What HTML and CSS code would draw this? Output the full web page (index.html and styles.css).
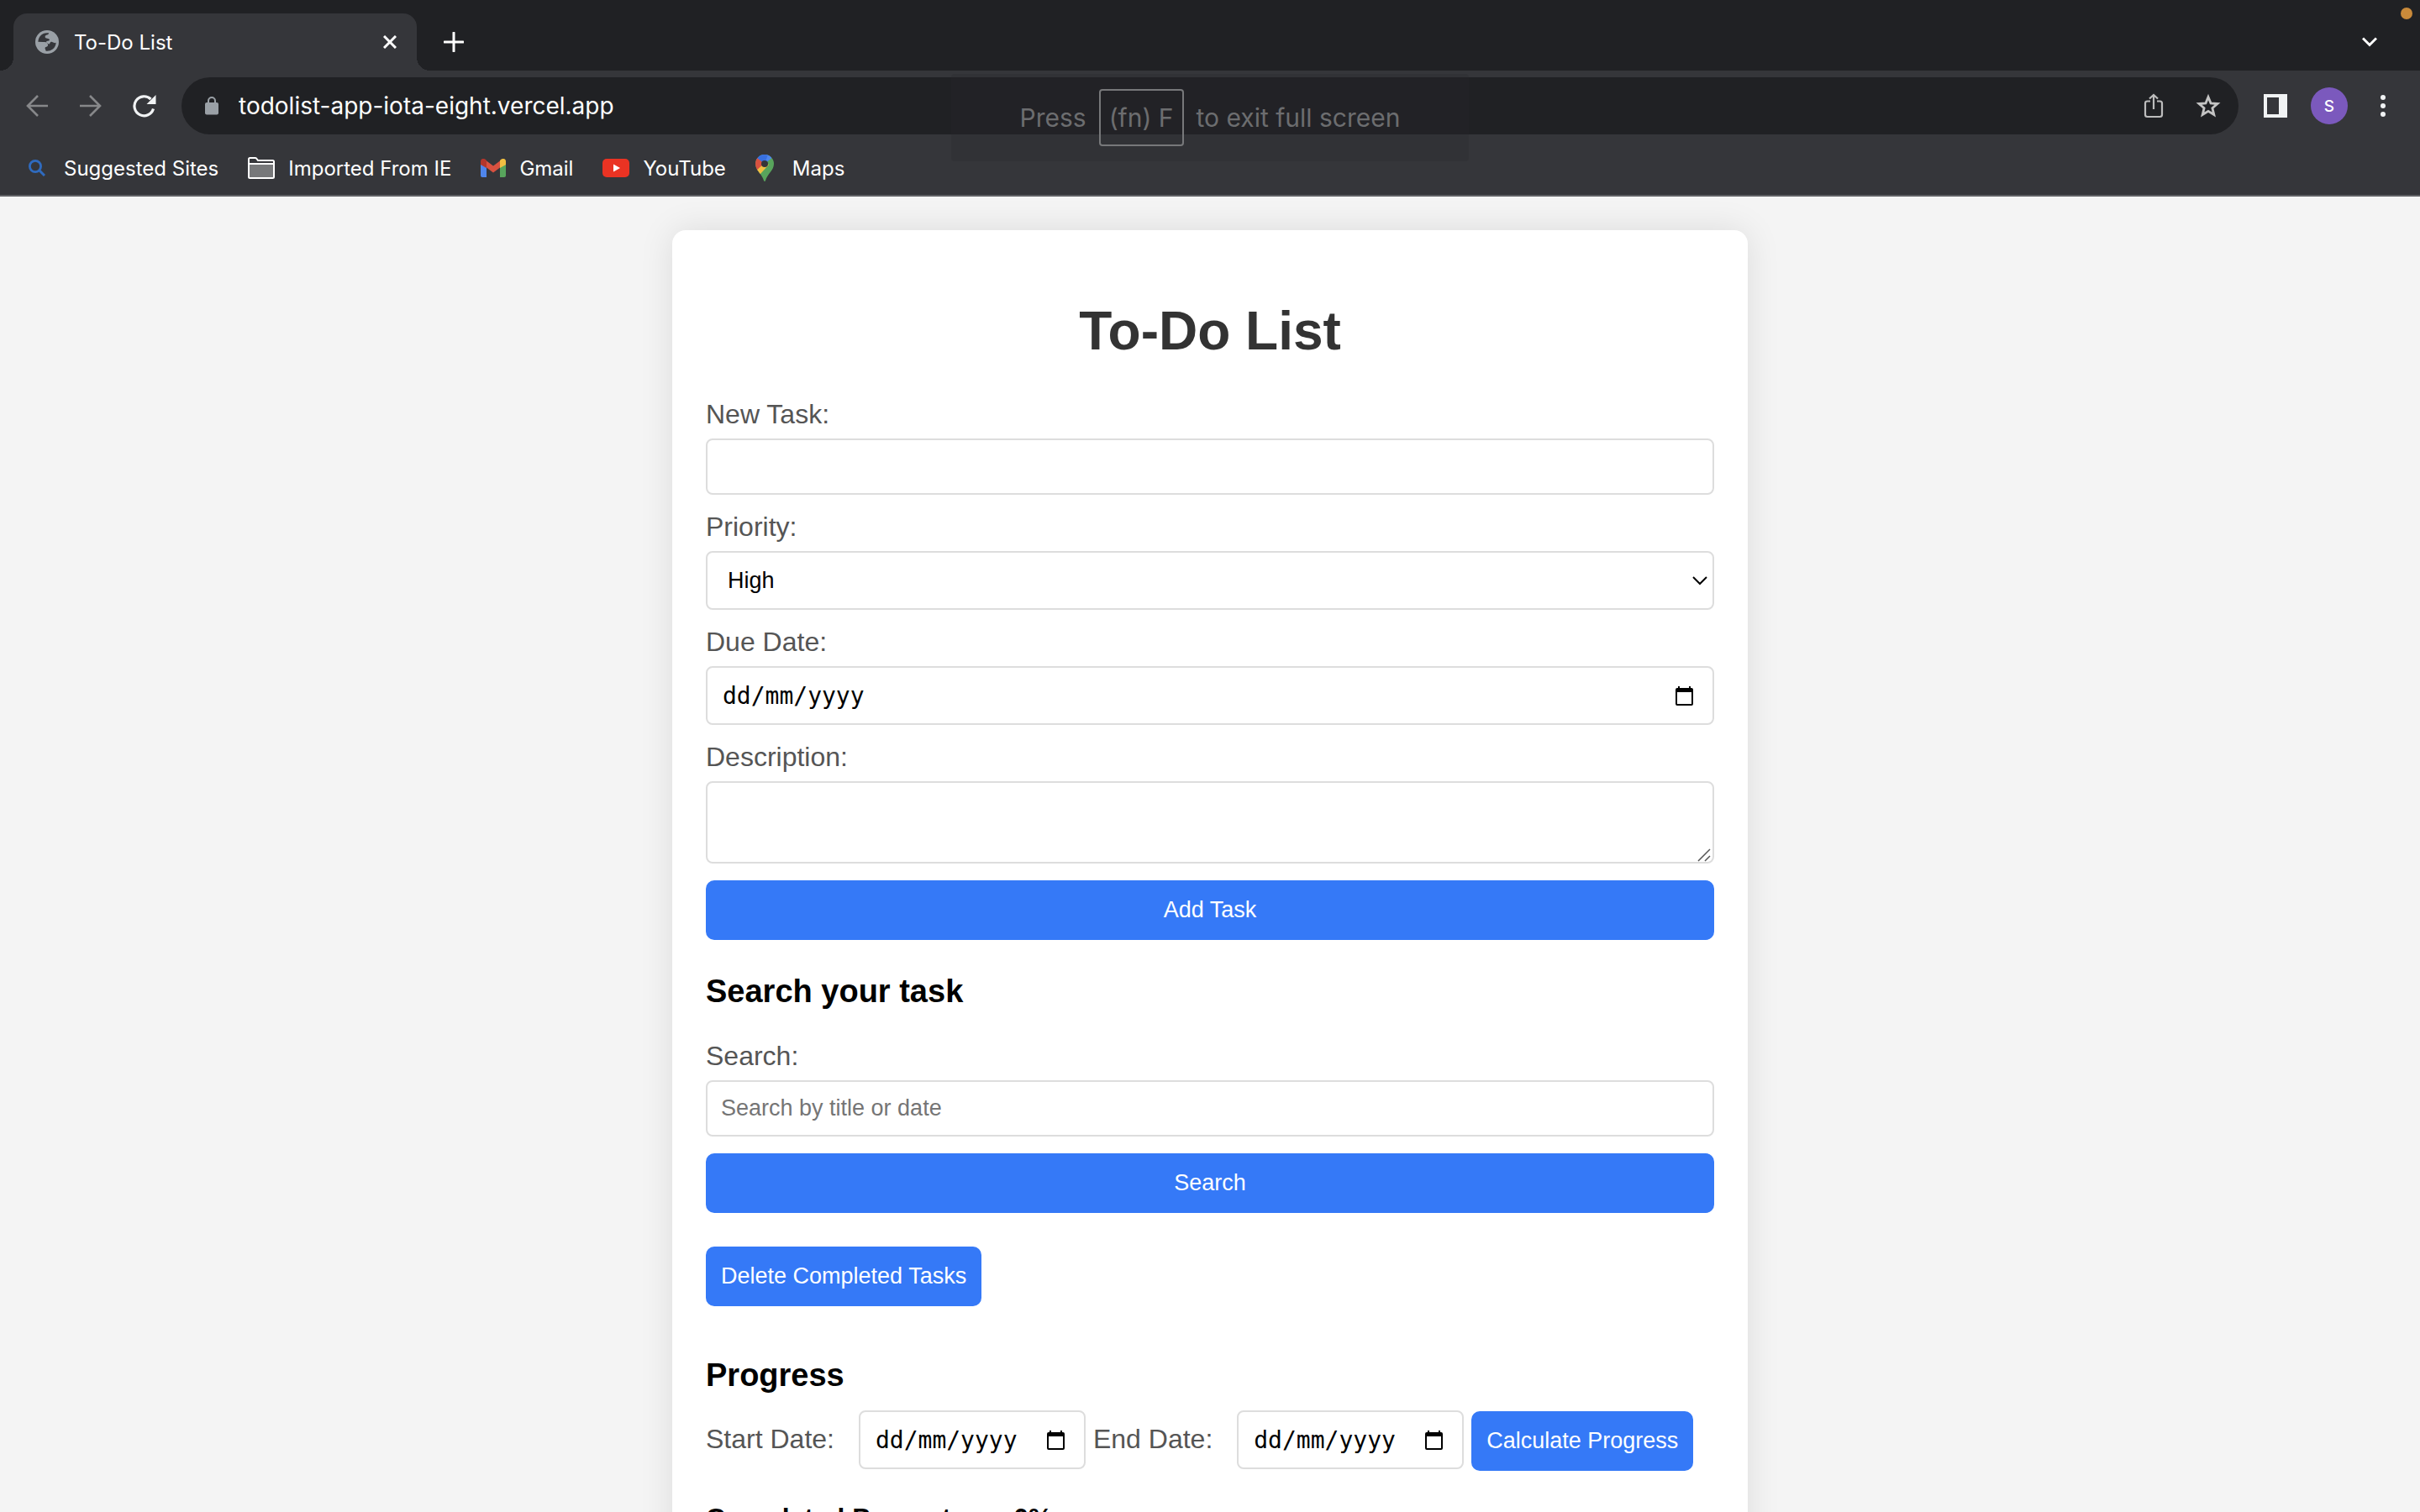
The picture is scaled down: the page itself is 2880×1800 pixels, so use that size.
FILE: index.html
```html
<!DOCTYPE html>
<html lang="en">
<head>
<meta charset="utf-8">
<title>To-Do List</title>
<link rel="stylesheet" href="styles.css">
</head>
<body>
<div class="browser">
  <header class="chrome">
    <div class="tabstrip">
      <div class="tab">
        <svg class="globe" width="28" height="28" viewBox="0 0 84 84" aria-hidden="true"><circle cx="42" cy="42" r="42" fill="#9aa0a6"/><path d="M10 41A32 32 0 0 1 48 10C49 19 35 15 35 23C35 32 50 27 51 34C51 40 40 37 39 42C38 46 43 48 43 53C43 60 34 57 34 64C34 69 38 68 37 74A32 32 0 0 0 74 44C66 49 62 39 55 42C51 45 53 50 47 49C43 46 40 42 28 42Z" fill="#35363a"/><path d="M10 42H30C42 43 46 48 45 54C44 61 34 57 34 65C34 69 38 69 37 75A33 33 0 0 1 10 42Z" fill="#9aa0a6"/></svg>
        <span class="tab-title">To-Do List</span>
        <button class="icon-button tab-close" aria-label="Close tab"><svg width="16" height="16" viewBox="0 0 16 16"><path d="M1 1L15 15M15 1L1 15" stroke="#fff" stroke-width="3"/></svg></button>
      </div>
      <button class="icon-button new-tab" aria-label="New tab"><svg width="24" height="24" viewBox="0 0 24 24"><path d="M12 1V23M1 12H23" stroke="#fff" stroke-width="3" stroke-linecap="round"/></svg></button>
      <button class="icon-button tab-search" aria-label="Search tabs"><svg width="18" height="12" viewBox="0 0 18 12"><path d="M1 1.500L9 9.500L17 1.500" fill="none" stroke="#fff" stroke-width="3"/></svg></button>
      <span class="recording-dot"></span>
    </div>
    <div class="toolbar">
      <nav class="nav-buttons">
        <button class="icon-button" aria-label="Back"><svg width="28" height="28" viewBox="0 0 28 28"><path d="M27 14H3M15 2L3 14L15 26" fill="none" stroke="#87888a" stroke-width="2.600"/></svg></button>
        <button class="icon-button" aria-label="Forward"><svg width="28" height="28" viewBox="0 0 28 28"><path d="M1 14H25M13 2L25 14L13 26" fill="none" stroke="#87888a" stroke-width="2.600"/></svg></button>
        <button class="icon-button" aria-label="Reload"><svg width="28" height="28" viewBox="0 0 28 28"><path d="M24.500 17.500A11.500 11.500 0 1 1 21.500 6" fill="none" stroke="#f1f3f4" stroke-width="3.200"/><path d="M27.500 1V12H16.500Z" fill="#f1f3f4"/></svg></button>
      </nav>
      <div class="omnibox">
        <svg width="16" height="22" viewBox="0 0 16 22" aria-hidden="true"><rect y="7" width="16" height="14.500" rx="2" fill="#9aa0a6"/><path d="M4 8V5A4 4 0 0 1 12 5V8" fill="none" stroke="#9aa0a6" stroke-width="2"/></svg>
        <input class="address" type="text" aria-label="Address" value="todolist-app-iota-eight.vercel.app">
        <button class="icon-button" aria-label="Share"><svg width="24" height="30" viewBox="0 0 24 30"><path d="M8 9.500H4.500Q2 9.500 2 12V25.500Q2 28 4.500 28H19.500Q22 28 22 25.500V12Q22 9.500 19.500 9.500H16M12 19V2M7 6.500L12 2L17 6.500" fill="none" stroke="#bdbdbd" stroke-width="2.200"/></svg></button>
        <button class="icon-button" aria-label="Bookmark this tab"><svg width="30" height="30" viewBox="0 0 30 30"><path d="M15 4.500L18 11.900L26 12.500L19.900 17.700L21.800 25.500L15 21.300L8.200 25.500L10.100 17.700L4 12.500L12 11.900Z" fill="none" stroke="#c4c4c4" stroke-width="2.800"/></svg></button>
      </div>
      <button class="icon-button" aria-label="Side panel"><svg width="28" height="28" viewBox="0 0 28 28"><path d="M0 0H28V28H0ZM4 4V24H18V4Z" fill="#f1f3f4" fill-rule="evenodd"/></svg></button>
      <button class="avatar" aria-label="Profile">S</button>
      <button class="icon-button menu" aria-label="Menu"><svg width="6" height="26" viewBox="0 0 6 26" fill="#f1f3f4"><circle cx="3" cy="3" r="3"/><circle cx="3" cy="13" r="3"/><circle cx="3" cy="23" r="3"/></svg></button>
    </div>
    <nav class="bookmarks">
      <a class="bookmark bookmark-search" href="#"><svg width="20" height="20" viewBox="0 0 20 20"><circle cx="8" cy="8" r="6.600" fill="none" stroke="#2f6bbf" stroke-width="2.800"/><path d="M12.500 12.500L19 19" stroke="#2f6bbf" stroke-width="3"/></svg>Suggested Sites</a>
      <a class="bookmark" href="#"><svg width="32" height="26" viewBox="0 0 32 26"><path d="M1 8V2.500Q1 1 2.500 1H9Q10 1 10.500 2L12 4H29.500Q31 4 31 5.500V8Z" fill="#35363a" stroke="#fff" stroke-width="2"/><path d="M1 8H31V23.500Q31 25 29.500 25H2.500Q1 25 1 23.500Z" fill="#77787a" stroke="#fff" stroke-width="2"/></svg>Imported From IE</a>
      <a class="bookmark" href="#"><svg width="30" height="22" viewBox="0 0 30 22"><path d="M0 5L7 9V22H2Q0 22 0 20Z" fill="#4f86ec"/><path d="M30 5L23 9V22H28Q30 22 30 20Z" fill="#58a55c"/><path d="M7 2.500L15 8.500L23 2.500V10.500L15 16.500L7 10.500Z" fill="#d85140"/><path d="M0 7V3C0 0 3.500-1 6 1L7 2V11Z" fill="#b3362c"/><path d="M30 7V3C30 0 26.500-1 24 1L23 2V11Z" fill="#f1bf42"/></svg>Gmail</a>
      <a class="bookmark" href="#"><svg width="32" height="22" viewBox="0 0 32 22"><rect width="32" height="22" rx="5" fill="#ea3323"/><path d="M13 6.500L21 11L13 15.500Z" fill="#fff"/></svg>YouTube</a>
      <a class="bookmark bookmark-maps" href="#"><svg width="22" height="32" viewBox="0 0 22 32"><defs><clipPath id="pin"><path d="M11 0A11 11 0 0 1 22 11C22 19 14 23 12 31Q11 33 10 31C8 23 0 19 0 11A11 11 0 0 1 11 0Z"/></clipPath></defs><g clip-path="url(#pin)"><path d="M0 0H22V32H0Z" fill="#58a55c"/><path d="M0 6L11 11L22 2V-2H0Z" fill="#4f86ec"/><path d="M0 3L3 4L11 11L2 20H-2Z" fill="#d85140"/><path d="M0 20L11 10L16 12L5 24Z" fill="#f1bf42"/><path d="M2 4L11 11L15 0H5Z" fill="#3870e0"/></g><circle cx="11" cy="11" r="4" fill="#35363a"/></svg>Maps</a>
    </nav>
    <div class="fullscreen-hint" role="status"><span>Press</span><kbd>(fn) F</kbd><span>to exit full screen</span></div>
  </header>

  <main class="page">
    <section class="card">
      <h1>To-Do List</h1>
      <form class="form">
        <label for="task">New Task:</label>
        <input class="field" id="task" type="text">
        <label for="priority">Priority:</label>
        <div class="control">
          <select class="field select" id="priority"><option>High</option><option>Medium</option><option>Low</option></select>
          <svg class="select-arrow" width="18" height="11" viewBox="0 0 18 11" aria-hidden="true"><path d="M1 1L9 9L17 1" fill="none" stroke="#000" stroke-width="2"/></svg>
        </div>
        <label for="due">Due Date:</label>
        <div class="field date">
          <input id="due" type="text" value="dd/mm/yyyy">
          <button class="icon-button" type="button" aria-label="Show date picker"><svg width="21" height="23" viewBox="0 0 21 23"><path d="M3 0H5V2H16V0H18V2H19Q21 2 21 4V21Q21 23 19 23H2Q0 23 0 21V4Q0 2 2 2H3ZM2 7V21H19V7Z" fill-rule="evenodd"/></svg></button>
        </div>
        <label for="description">Description:</label>
        <div class="control">
          <textarea class="field textarea" id="description"></textarea>
          <svg class="resize-grip" width="16" height="16" viewBox="0 0 16 16" aria-hidden="true"><path d="M1 15L15 1M9 15L15 9" stroke="#555" stroke-width="1.500"/></svg>
        </div>
        <button class="button" type="button">Add Task</button>
      </form>

      <h2 class="search-heading">Search your task</h2>
      <form class="form">
        <label for="search">Search:</label>
        <input class="field" id="search" type="text" placeholder="Search by title or date">
        <button class="button" type="button">Search</button>
      </form>
      <button class="button delete" type="button">Delete Completed Tasks</button>

      <h2 class="progress-heading">Progress</h2>
      <form class="range">
        <label for="start">Start Date:</label>
        <div class="field date">
          <input id="start" type="text" value="dd/mm/yyyy">
          <button class="icon-button" type="button" aria-label="Show start date picker"><svg width="21" height="23" viewBox="0 0 21 23"><path d="M3 0H5V2H16V0H18V2H19Q21 2 21 4V21Q21 23 19 23H2Q0 23 0 21V4Q0 2 2 2H3ZM2 7V21H19V7Z" fill-rule="evenodd"/></svg></button>
        </div>
        <label for="end">End Date:</label>
        <div class="field date">
          <input id="end" type="text" value="dd/mm/yyyy">
          <button class="icon-button" type="button" aria-label="Show end date picker"><svg width="21" height="23" viewBox="0 0 21 23"><path d="M3 0H5V2H16V0H18V2H19Q21 2 21 4V21Q21 23 19 23H2Q0 23 0 21V4Q0 2 2 2H3ZM2 7V21H19V7Z" fill-rule="evenodd"/></svg></button>
        </div>
        <button class="button" type="button">Calculate Progress</button>
      </form>
      <h3>Completed Percentage: 0%</h3>
    </section>
  </main>
</div>
</body>
</html>
```
FILE: styles.css
```css
* {
  box-sizing: border-box;
}

body {
  margin: 0;
  background: #f4f4f4;
  font-family: "Liberation Sans", Arial, sans-serif;
}

button,
input,
select,
textarea {
  margin: 0;
  font-family: inherit;
}

svg {
  display: block;
  flex: none;
}

.browser {
  display: flex;
  flex-direction: column;
  height: 100vh;
  overflow: hidden;
}

/* Browser window */
.chrome {
  position: relative;
  flex: none;
  background: #35363a;
  border-bottom: 2px solid #5f6064;
  color: #fff;
  font-family: Inter, "Noto Sans", sans-serif;
}

.icon-button {
  display: flex;
  flex: none;
  padding: 0;
  border: 0;
  background: none;
}

.tabstrip {
  position: relative;
  display: flex;
  align-items: center;
  height: 84px;
  padding: 16px 51px 0 16px;
  background: #202124;
}

.tab {
  position: relative;
  display: flex;
  align-items: center;
  gap: 18px;
  width: 480px;
  height: 68px;
  padding: 0 24px 0 26px;
  border-radius: 16px 16px 0 0;
  background: #35363a;
}

.tab::before,
.tab::after {
  content: "";
  position: absolute;
  bottom: 0;
  width: 16px;
  height: 16px;
}

.tab::before {
  right: 100%;
  background: radial-gradient(circle at 0 0, #202124 16px, #35363a 16px);
}

.tab::after {
  left: 100%;
  background: radial-gradient(circle at 100% 0, #202124 16px, #35363a 16px);
}

.tab-title {
  flex: 1;
  font-size: 24px;
}

.new-tab {
  margin-left: 32px;
}

.tab-search {
  margin-left: auto;
}

.recording-dot {
  position: absolute;
  top: 9px;
  right: 9px;
  width: 14px;
  height: 14px;
  border-radius: 50%;
  background: #c98a3a;
}

.toolbar {
  display: flex;
  align-items: center;
  padding: 8px 41px 8px 30px;
}

.nav-buttons {
  display: flex;
  gap: 36px;
  margin-right: 30px;
}

.omnibox {
  display: flex;
  flex: 1;
  align-items: center;
  gap: 38px;
  height: 68px;
  margin-right: 30px;
  padding: 0 21px 0 28px;
  border-radius: 34px;
  background: #202124;
}

.address {
  flex: 1;
  min-width: 0;
  margin-left: -14px;
  padding: 0;
  border: 0;
  background: none;
  color: #fff;
  font-size: 28px;
}

.avatar {
  width: 44px;
  height: 44px;
  margin: 0 39px 0 28px;
  padding: 0;
  border: 0;
  border-radius: 50%;
  background: #7b59bd;
  color: #fff;
  font-size: 19px;
  font-weight: 500;
}

.bookmarks {
  display: flex;
  align-items: center;
  gap: 35px;
  height: 64px;
  padding: 0 34px;
}

.bookmark {
  display: flex;
  align-items: center;
  gap: 16px;
  color: #fff;
  font-size: 24px;
  text-decoration: none;
}

.bookmark-search,
.bookmark-maps {
  gap: 22px;
}

.fullscreen-hint {
  position: absolute;
  top: 88px;
  left: 50%;
  display: flex;
  align-items: center;
  justify-content: center;
  gap: 15px;
  width: 616px;
  height: 104px;
  border-radius: 4px;
  background: rgba(38, 39, 42, 0.25);
  color: #6c6d6f;
  font-size: 30px;
  transform: translateX(-50%);
}

.fullscreen-hint kbd {
  padding: 14px 10px;
  border: 2px solid #77787a;
  border-radius: 4px;
  font-family: inherit;
  line-height: 36px;
}

/* To-do page */
.page {
  flex: 1;
  min-height: 0;
  padding: 40px;
}

.card {
  max-width: 1280px;
  margin: 0 auto;
  padding: 40px 40px 80px;
  border-radius: 16px;
  background: #fff;
  box-shadow: 0 0 40px rgba(0, 0, 0, 0.1);
}

h1,
h2,
h3 {
  margin: 0;
}

h1 {
  padding: 43px 0 44px;
  color: #333;
  font-size: 64px;
  line-height: 74px;
  text-align: center;
}

h2 {
  font-size: 38px;
  line-height: 42px;
}

h3 {
  padding-top: 38px;
  font-size: 32px;
  line-height: 36px;
}

.search-heading {
  padding: 40px 0 38px;
}

.progress-heading {
  padding: 61px 0 21px;
}

label {
  color: #555;
  font-size: 32px;
  line-height: 36px;
}

.form {
  display: flex;
  flex-direction: column;
}

.form label {
  margin-bottom: 11px;
}

.field {
  width: 100%;
  height: 67px;
  margin-bottom: 20px;
  padding: 0 16px;
  border: 2px solid #ddd;
  border-radius: 8px;
  background: #fff;
  color: #000;
  font-size: 27px;
}

.field::placeholder {
  color: #757575;
}

.control {
  position: relative;
  display: flex;
}

.select {
  height: 70px;
  padding: 0 24px;
  appearance: none;
}

.select-arrow {
  position: absolute;
  top: 30px;
  right: 8px;
}

.date {
  display: flex;
  align-items: center;
  justify-content: space-between;
  height: 70px;
  padding: 0 23px 0 18px;
}

.date input {
  flex: 1;
  min-width: 0;
  padding: 0;
  border: 0;
  font-family: "DejaVu Sans Mono", monospace;
  font-size: 28px;
}

.textarea {
  height: 98px;
  resize: none;
}

.resize-grip {
  position: absolute;
  right: 4px;
  bottom: 22px;
}

.button {
  height: 71px;
  padding: 0 18px;
  border: 0;
  border-radius: 10px;
  background: #3579f7;
  color: #fff;
  font-size: 27px;
}

.delete {
  display: block;
  margin-top: 40px;
}

.range {
  display: flex;
  align-items: baseline;
  gap: 9px;
}

.range label {
  margin-right: 20px;
}

.range .field {
  width: 270px;
  margin-bottom: 0;
}
```
